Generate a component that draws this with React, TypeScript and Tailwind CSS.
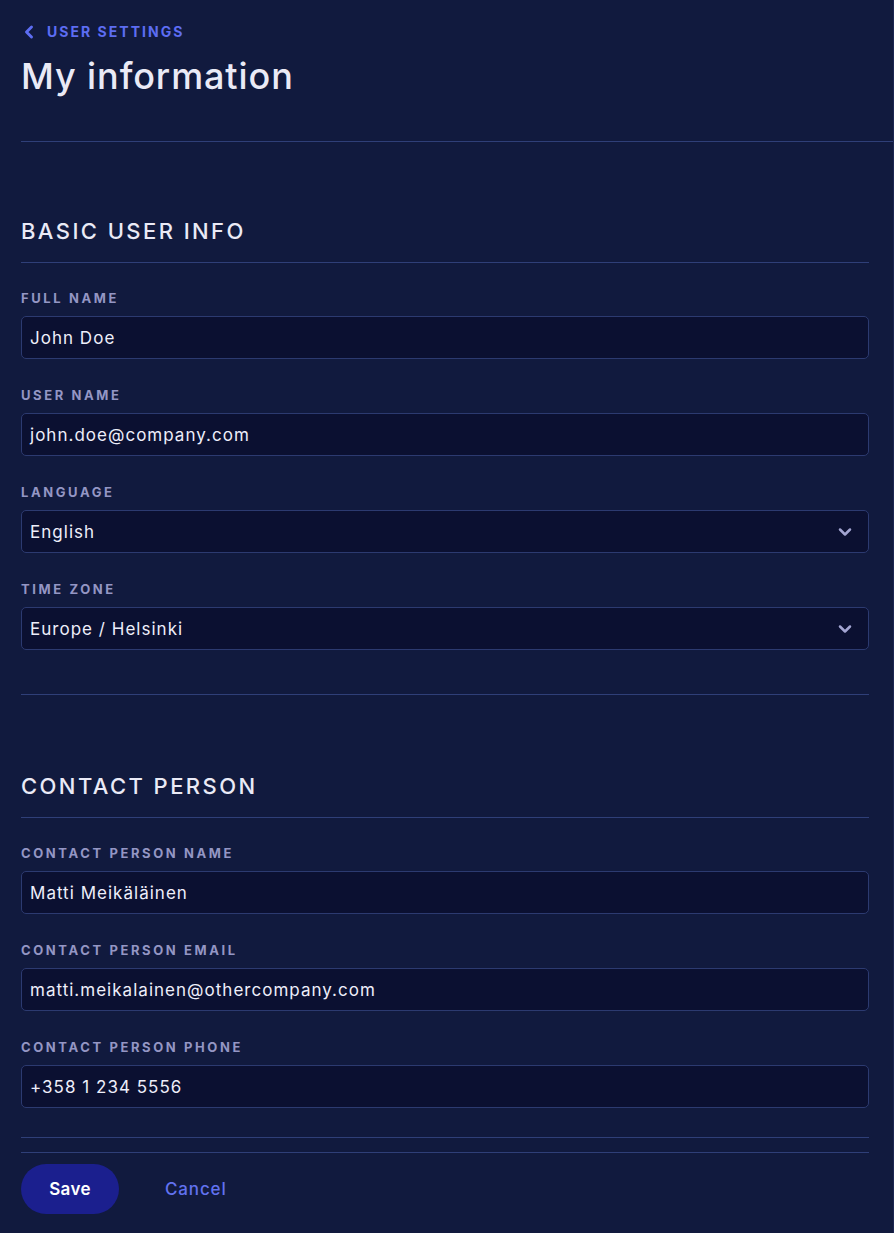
import { ChevronDown, ChevronLeft } from "lucide-react";

const font = { fontFamily: "Inter, 'Noto Sans', sans-serif" };

function Field({ label, value, select }: { label: string; value: string; select?: boolean }) {
  return (
    <div className="flex flex-col">
      <label className="mb-[11px] text-[13px] font-bold uppercase leading-none tracking-[0.2em] text-[#9496c4]">{label}</label>
      <div className="flex h-[43px] items-center justify-between rounded-[5px] border border-[#2c3a70] bg-[#0b1031] pl-[8px] pr-[13px]">
        <span className="pt-[2px] text-[17px] tracking-[0.06em] text-[#eeeefa]">{value}</span>
        {select ? <ChevronDown className="h-[20px] w-[20px] text-[#a3a5d2]" strokeWidth={3} /> : null}
      </div>
    </div>
  );
}

export default function App() {
  return (
    <div className="min-h-[1233px] border-r border-[#1c2652] bg-[#111a3e]" style={font}>
      <div className="pl-[21px]">
        <div className="pt-[24px]">
          <a className="flex items-center gap-[8px] text-[14px] font-bold uppercase leading-none tracking-[0.145em] text-[#5d6df2]">
            <ChevronLeft className="-ml-[2px] -my-[2px] h-[20px] w-[20px]" strokeWidth={3.5} />
            User settings
          </a>
          <h1 className="mt-[18px] text-[36px] font-medium leading-none tracking-[0.025em] text-[#eaeaf6]">My information</h1>
        </div>
        <div className="mt-[47px] h-px bg-[#2f3f78]" />

        <div className="pr-[24px]">
          <h2 className="mt-[78px] text-[22px] font-medium uppercase leading-none tracking-[0.11em] text-[#eaeaf6]">Basic user info</h2>
          <div className="mt-[20px] h-px bg-[#2f3f78]" />
          <div className="mt-[29px] flex flex-col gap-[30px]">
            <Field label="Full name" value="John Doe" />
            <Field label="User name" value="john.doe@company.com" />
            <Field label="Language" value="English" select />
            <Field label="Time zone" value="Europe / Helsinki" select />
          </div>
          <div className="mt-[44px] h-px bg-[#2f3f78]" />

          <h2 className="mt-[80px] text-[22px] font-medium uppercase leading-none tracking-[0.11em] text-[#eaeaf6]">Contact person</h2>
          <div className="mt-[20px] h-px bg-[#2f3f78]" />
          <div className="mt-[29px] flex flex-col gap-[30px]">
            <Field label="Contact person name" value="Matti Meikäläinen" />
            <Field label="Contact person email" value="matti.meikalainen@othercompany.com" />
            <Field label="Contact person phone" value="+358 1 234 5556" />
          </div>
          <div className="mt-[29px] h-px bg-[#2f3f78]" />
          <div className="mt-[14px] h-px bg-[#2f3f78]" />
          <div className="mt-[11px] flex items-center gap-[46px]">
            <button className="h-[50px] w-[98px] rounded-full bg-[#1b1f8e] pt-[2px] text-[17px] font-semibold tracking-[0.02em] text-white">Save</button>
            <button className="pt-[2px] text-[17px] font-medium tracking-[0.05em] text-[#6272f0]">Cancel</button>
          </div>
        </div>
      </div>
    </div>
  );
}
